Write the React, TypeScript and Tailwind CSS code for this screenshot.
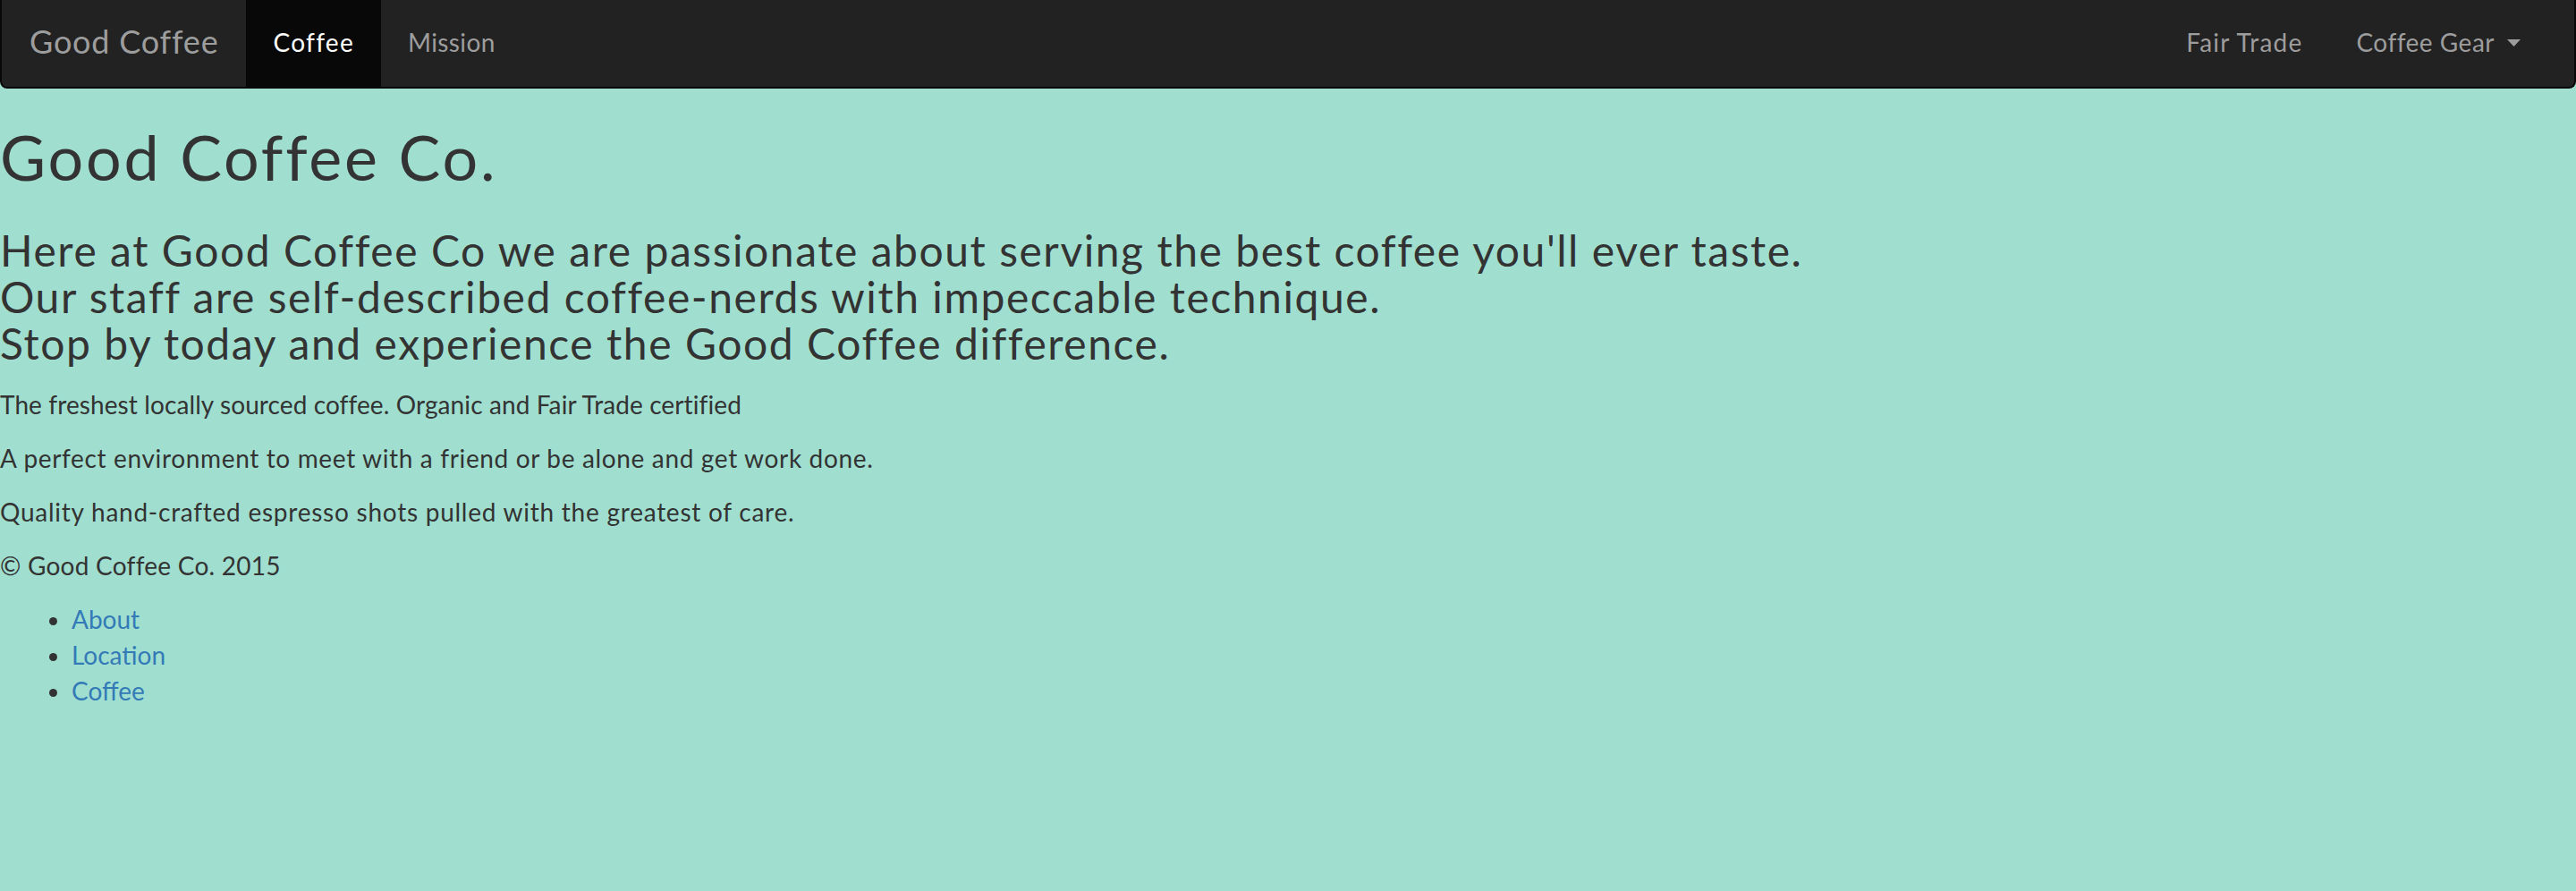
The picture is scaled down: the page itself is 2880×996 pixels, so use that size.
const navLeft = [
  { label: "Coffee", active: true },
  { label: "Mission", active: false },
];

const points = [
  { text: "The freshest locally sourced coffee. Organic and Fair Trade certified", track: "tracking-[0.1px]" },
  { text: "A perfect environment to meet with a friend or be alone and get work done.", track: "tracking-[0.65px]" },
  { text: "Quality hand-crafted espresso shots pulled with the greatest of care.", track: "tracking-[0.75px]" },
];

const footerLinks = ["About", "Location", "Coffee"];

const Navbar = () => {
  return (
    <nav className="flex h-[99px] items-stretch justify-between rounded-b-[8px] border-x-2 border-b-2 border-[#080808] bg-[#222]">
      <div className="flex items-stretch">
        <a className="flex items-center px-[31px] pb-[5px] text-[36px] tracking-[0.8px] text-[#9d9d9d]">
          Good Coffee
        </a>
        {navLeft.map((item) => (
          <a
            key={item.label}
            className={`flex items-center px-[30px] pb-[4px] text-[28px] ${
              item.active ? "bg-[#080808] tracking-[1.3px] text-white" : "tracking-[0.4px] text-[#9d9d9d]"
            }`}
          >
            {item.label}
          </a>
        ))}
      </div>

      <div className="mr-[30px] flex items-stretch">
        <a className="flex items-center px-[30px] pb-[4px] text-[28px] tracking-[1.2px] text-[#9d9d9d]">
          Fair Trade
        </a>
        <a className="flex items-center gap-[14px] px-[30px] pb-[4px] text-[28px] tracking-[0.5px] text-[#9d9d9d]">
          Coffee Gear
          {/* bootstrap caret */}
          <svg width="15" height="8" viewBox="0 0 15 8" className="mt-[2px]">
            <polygon points="0,0 15,0 7.5,8" fill="#9d9d9d" />
          </svg>
        </a>
      </div>
    </nav>
  );
};

export default function App() {
  return (
    <div className="min-h-screen bg-[#a0dfd0] font-['Lato','Liberation_Sans',sans-serif] text-[#333]">
      <Navbar />

      <h1 className="mt-[36px] text-[70px] leading-[80px] tracking-[2.8px]">Good Coffee Co.</h1>

      <h3 className="mt-[39px] text-[48px] leading-[52px] tracking-[1.55px]">
        Here at Good Coffee Co we are passionate about serving the best coffee you'll ever taste.
        <br />
        Our staff are self-described coffee-nerds with impeccable technique.
        <br />
        Stop by today and experience the Good Coffee difference.
      </h3>

      <div className="mt-[22px]">
        {points.map((p) => (
          <p key={p.text} className={`mb-[20px] text-[28px] leading-[40px] ${p.track}`}>
            {p.text}
          </p>
        ))}
        <p className="mb-[20px] text-[28px] leading-[40px] tracking-[0.25px]">&copy; Good Coffee Co. 2015</p>
      </div>

      <ul className="list-disc pl-[80px] text-[28px] leading-[40px]">
        {footerLinks.map((link) => (
          <li key={link}>
            <a className="text-[#337ab7]">{link}</a>
          </li>
        ))}
      </ul>
    </div>
  );
}
